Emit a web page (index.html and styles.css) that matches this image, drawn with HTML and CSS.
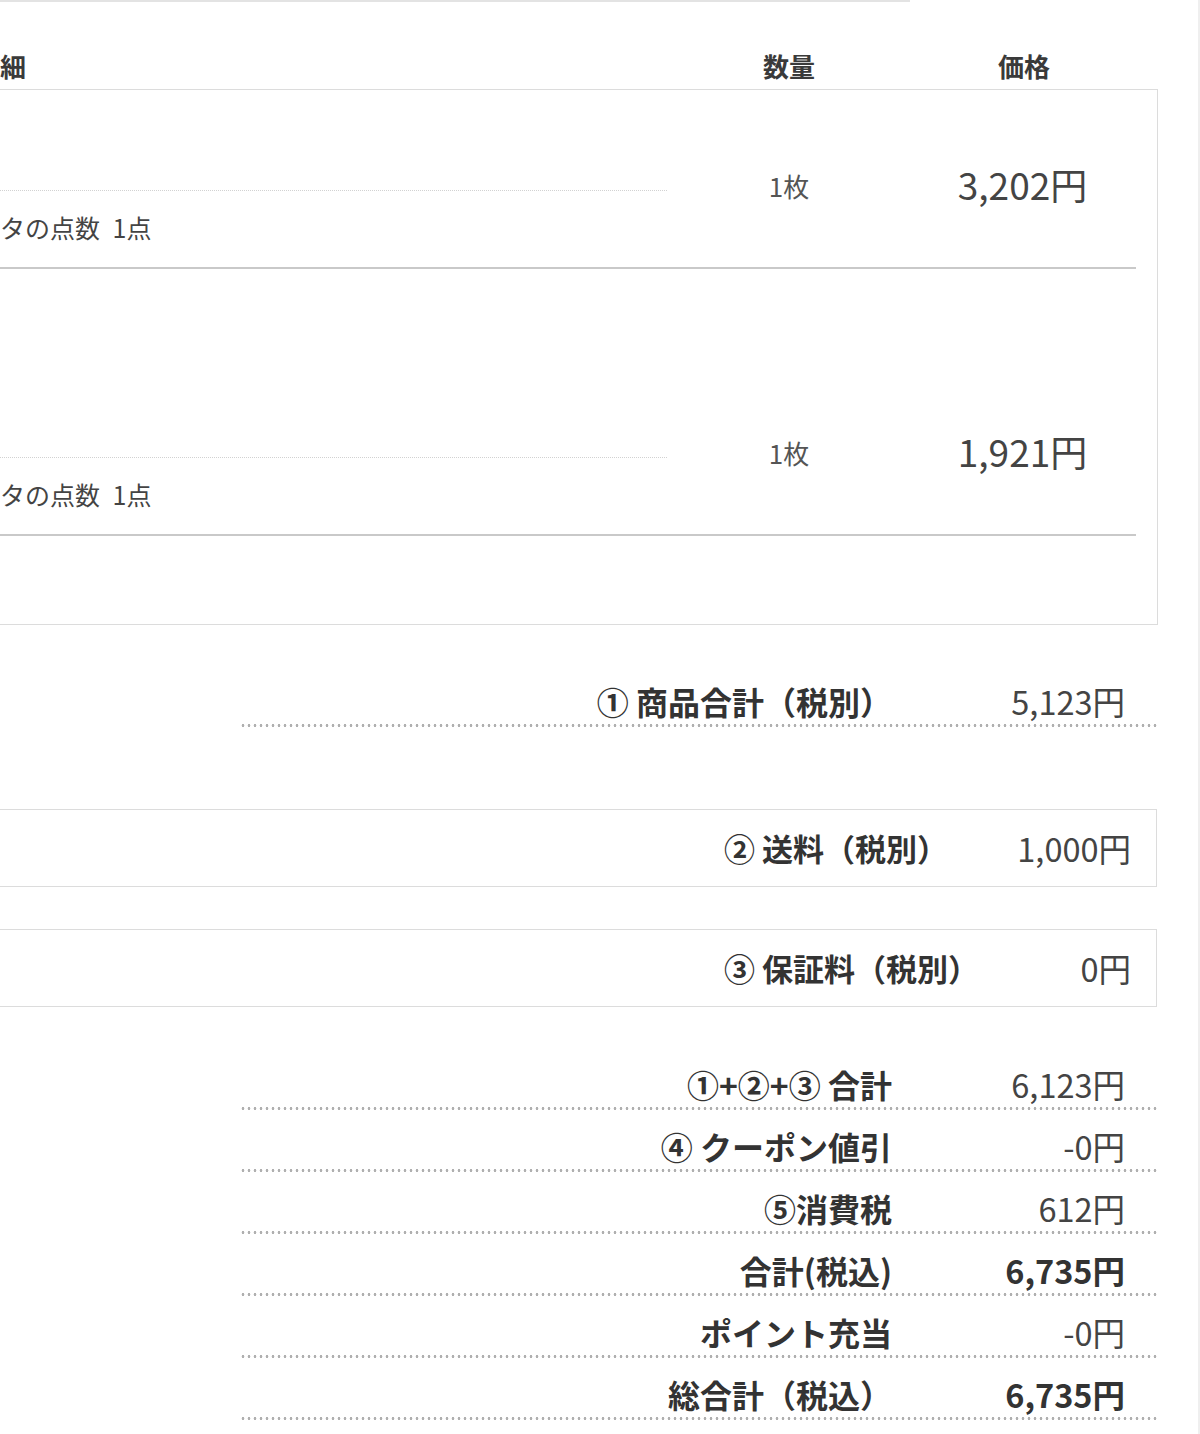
FILE: index.html
```html
<!DOCTYPE html>
<html lang="ja">
<head>
<meta charset="utf-8">
<title>明細</title>
<link rel="stylesheet" href="styles.css">
</head>
<body>
<div class="page">
  <div class="top-rule"></div>

  <div class="cols head">
    <div class="head-name">細</div>
    <div class="head-qty">数量</div>
    <div class="head-price">価格</div>
  </div>

  <div class="items">
    <div class="item">
      <div class="item-name"></div>
      <div class="item-qty">1枚</div>
      <div class="item-price">3,202円</div>
      <div class="item-points">タの点数 1点</div>
    </div>
    <div class="item">
      <div class="item-name tall"></div>
      <div class="item-qty">1枚</div>
      <div class="item-price">1,921円</div>
      <div class="item-points">タの点数 1点</div>
    </div>
  </div>

  <div class="sum-row first">
    <div class="sum-label">① 商品合計（税別）</div>
    <div class="sum-value">5,123円</div>
  </div>

  <div class="fee-box ship">
    <div class="fee-label">② 送料（税別）</div>
    <div class="fee-value">1,000円</div>
  </div>
  <div class="fee-box guar">
    <div class="fee-label">③ 保証料（税別）</div>
    <div class="fee-value">0円</div>
  </div>

  <div class="totals">
    <div class="sum-row">
      <div class="sum-label">①+②+③ 合計</div>
      <div class="sum-value">6,123円</div>
    </div>
    <div class="sum-row">
      <div class="sum-label">④ クーポン値引</div>
      <div class="sum-value">-0円</div>
    </div>
    <div class="sum-row">
      <div class="sum-label">⑤消費税</div>
      <div class="sum-value">612円</div>
    </div>
    <div class="sum-row">
      <div class="sum-label">合計(税込)</div>
      <div class="sum-value strong">6,735円</div>
    </div>
    <div class="sum-row">
      <div class="sum-label">ポイント充当</div>
      <div class="sum-value">-0円</div>
    </div>
    <div class="sum-row">
      <div class="sum-label">総合計（税込）</div>
      <div class="sum-value strong">6,735円</div>
    </div>
  </div>
</div>
</body>
</html>
```

FILE: styles.css
```css
html, body {
  margin: 0;
  padding: 0;
  background: #ffffff;
}

body {
  font-family: "Noto Sans CJK JP", "Noto Sans", sans-serif;
  color: #333333;
  text-spacing-trim: space-all;
}

.page {
  width: 1198px;
  min-height: 1434px;
  border-right: 2px solid #efefef;
  box-sizing: content-box;
}

.top-rule {
  width: 910px;
  height: 0;
  border-top: 2px solid #e3e3e3;
}

/* column header */
.cols {
  display: grid;
  grid-template-columns: 669px 240px 230px;
}

.head {
  padding-top: 46px;
  padding-bottom: 5px;
  font-size: 26px;
  font-weight: 700;
  line-height: 36px;
  color: #3a3a3a;
}

.head-qty,
.head-price {
  text-align: center;
}

/* items box */
.items {
  width: 1157px;
  border: 1px solid #dcdcdc;
  border-left: none;
  padding-bottom: 88px;
}

.item {
  display: grid;
  grid-template-columns: 669px 240px 1fr;
  grid-template-rows: auto auto;
  margin-right: 21px;
  border-bottom: 2px solid #c9c9c9;
}

.item-name {
  grid-column: 1;
  grid-row: 1;
  width: 667px;
  height: 100px;
  border-bottom: 1px dotted #d2d2d2;
}

.item-name.tall {
  height: 188px;
}

.item-qty {
  grid-column: 2;
  grid-row: 1;
  align-self: end;
  margin-bottom: -13px;
  text-align: center;
  font-size: 26px;
  line-height: 36px;
  color: #555555;
}

.item-price {
  grid-column: 3;
  grid-row: 1;
  align-self: end;
  margin-bottom: -13px;
  text-align: center;
  font-size: 37px;
  line-height: 40px;
  color: #444444;
}

.item-points {
  grid-column: 1;
  grid-row: 2;
  padding-top: 18px;
  padding-bottom: 22px;
  font-size: 25px;
  line-height: 36px;
  color: #444444;
  word-spacing: 7px;
}

/* summary rows with dotted rule */
.sum-row {
  display: grid;
  grid-template-columns: 1fr 233px;
  margin-left: 240px;
  width: 918px;
  padding: 16px 33px 3px 0;
  box-sizing: border-box;
  height: 62px;
  background-image: radial-gradient(circle, #b0b0b0 1.2px, transparent 1.6px);
  background-size: 6px 3px;
  background-repeat: repeat-x;
  background-position: left bottom;
  line-height: 40px;
}

.sum-row.first {
  margin-top: 40px;
}

.sum-label {
  text-align: right;
  font-size: 32px;
  font-weight: 700;
  color: #333333;
}

.sum-value {
  text-align: right;
  font-size: 32.5px;
  color: #444444;
}

.sum-value.strong {
  font-weight: 700;
  color: #333333;
}

/* fee boxes */
.fee-box {
  display: flex;
  align-items: center;
  justify-content: space-between;
  width: 1157px;
  height: 78px;
  box-sizing: border-box;
  border: 1px solid #dcdcdc;
  border-left: none;
  padding: 0 25px 0 724px;
  line-height: 40px;
}

.fee-box.ship {
  margin-top: 82px;
}

.fee-box.guar {
  margin-top: 42px;
}

.fee-label {
  font-size: 31px;
  font-weight: 700;
  color: #333333;
}

.fee-value {
  font-size: 32.5px;
  color: #444444;
}

.totals {
  margin-top: 41px;
}
```
